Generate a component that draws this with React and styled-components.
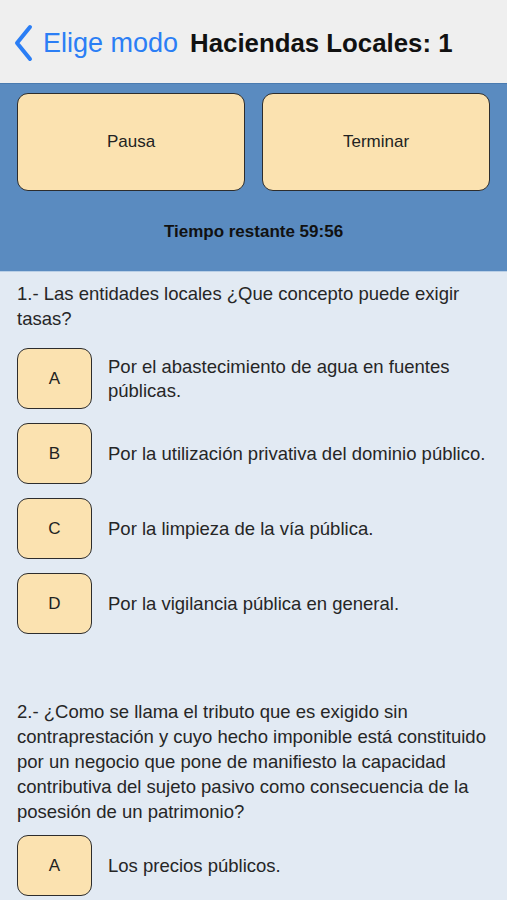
import React from 'react'
import styled, { createGlobalStyle } from 'styled-components'

const GlobalStyle = createGlobalStyle`
    body {
        margin: 0;
        background: #e2eaf3;
        font-family: "Liberation Sans", Arial, sans-serif;
    }
`;

const Page = styled.div`
    width: 507px;
    min-height: 900px;
    background: #e2eaf3;
`;

const NavBar = styled.div`
    height: 83px;
    background: #efefef;
    display: flex;
    align-items: center;
    padding: 3px 0 0 13px;
    box-sizing: border-box;
    white-space: nowrap;
`;

const Back = styled.span`
    display: flex;
    align-items: center;
    color: #2b7ef5;
    font-size: 27px;
    margin-right: 12px;

    svg {
        margin-right: 9px;
    }
`;

const Title = styled.span`
    font-weight: bold;
    font-size: 25.8px;
    color: #111;
`;

const Controls = styled.div`
    background: #5a8bc0;
    border-top: 1px solid #4a7bb0;
    border-bottom: 1px solid #b9cfe6;
    padding: 9px 17px 0;
    height: 189px;
    box-sizing: border-box;
`;

const ButtonRow = styled.div`
    display: grid;
    grid-template-columns: 1fr 1fr;
    gap: 17px;
`;

const Button = styled.div`
    height: 98px;
    background: #fbe2b0;
    border: 1.5px solid #2d2d2d;
    border-radius: 11px;
    box-sizing: border-box;
    display: flex;
    align-items: center;
    justify-content: center;
    font-size: 17px;
    color: #222;
`;

const Timer = styled.div`
    text-align: center;
    font-weight: bold;
    font-size: 17px;
    color: #111;
    margin-top: 31px;
`;

const Question = styled.div`
    padding: ${p => p.$top}px 17px 0;
`;

const Prompt = styled.p`
    margin: 0 0 ${p => p.$gap}px;
    font-size: 18.5px;
    line-height: 25px;
    color: #262626;
`;

const Options = styled.div`
    display: flex;
    flex-direction: column;
    gap: 14px;
`;

const Option = styled.div`
    display: flex;
    align-items: center;
    gap: 16px;
`;

const Letter = styled.div`
    flex: 0 0 75px;
    height: 61px;
    background: #fbe2b0;
    border: 1.5px solid #2d2d2d;
    border-radius: 11px;
    box-sizing: border-box;
    display: flex;
    align-items: center;
    justify-content: center;
    font-size: 17px;
    color: #222;
`;

const Answer = styled.div`
    font-size: 18.5px;
    line-height: 24px;
    color: #262626;
`;

const questions = [
    {
        top: 9,
        gap: 17,
        text: '1.- Las entidades locales ¿Que concepto puede exigir tasas?',
        options: [
            'Por el abastecimiento de agua en fuentes públicas.',
            'Por la utilización privativa del dominio público.',
            'Por la limpieza de la vía pública.',
            'Por la vigilancia pública en general.',
        ],
    },
    {
        top: 65,
        gap: 11,
        text: '2.- ¿Como se llama el tributo que es exigido sin contraprestación y cuyo hecho imponible está constituido por un negocio que pone de manifiesto la capacidad contributiva del sujeto pasivo como consecuencia de la posesión de un patrimonio?',
        options: ['Los precios públicos.'],
    },
];

export default function App() {
    return (
        <Page>
            <GlobalStyle />
            <NavBar>
                <Back>
                    <svg width="21" height="38" viewBox="0 0 21 38">
                        <path d="M17 3 L4 19 L17 35" fill="none" stroke="#2b7ef5" strokeWidth="4" strokeLinecap="round" strokeLinejoin="round" />
                    </svg>
                    Elige modo
                </Back>
                <Title>Haciendas Locales: 1</Title>
            </NavBar>
            <Controls>
                <ButtonRow>
                    <Button>Pausa</Button>
                    <Button>Terminar</Button>
                </ButtonRow>
                <Timer>Tiempo restante 59:56</Timer>
            </Controls>
            {questions.map((q, i) => (
                <Question key={i} $top={q.top}>
                    <Prompt $gap={q.gap}>{q.text}</Prompt>
                    <Options>
                        {q.options.map((o, j) => (
                            <Option key={j}>
                                <Letter>{'ABCD'[j]}</Letter>
                                <Answer>{o}</Answer>
                            </Option>
                        ))}
                    </Options>
                </Question>
            ))}
        </Page>
    )
}
